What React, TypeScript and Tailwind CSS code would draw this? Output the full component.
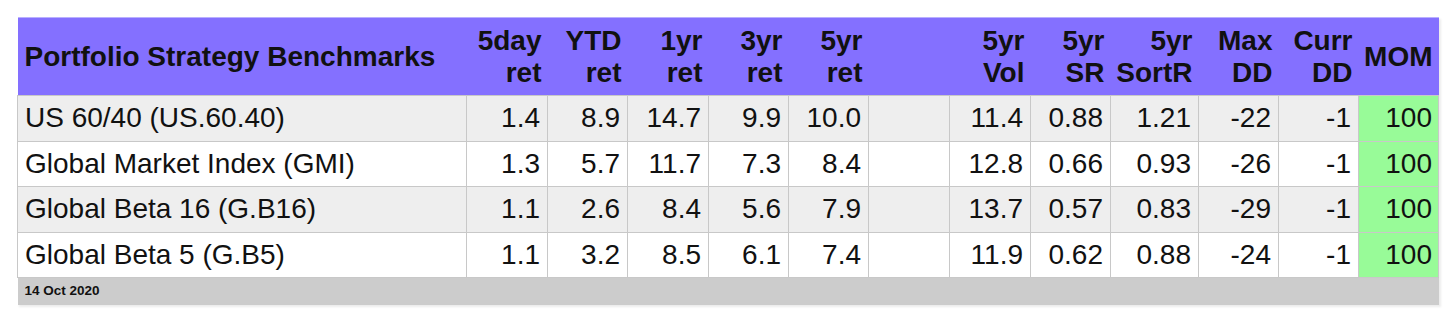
const rows = [
  { name: 'US 60/40 (US.60.40)', vals: ['1.4', '8.9', '14.7', '9.9', '10.0', '', '11.4', '0.88', '1.21', '-22', '-1'], mom: '100' },
  { name: 'Global Market Index (GMI)', vals: ['1.3', '5.7', '11.7', '7.3', '8.4', '', '12.8', '0.66', '0.93', '-26', '-1'], mom: '100' },
  { name: 'Global Beta 16 (G.B16)', vals: ['1.1', '2.6', '8.4', '5.6', '7.9', '', '13.7', '0.57', '0.83', '-29', '-1'], mom: '100' },
  { name: 'Global Beta 5 (G.B5)', vals: ['1.1', '3.2', '8.5', '6.1', '7.4', '', '11.9', '0.62', '0.88', '-24', '-1'], mom: '100' },
];

const headers: [string, string][] = [
  ['5day', 'ret'],
  ['YTD', 'ret'],
  ['1yr', 'ret'],
  ['3yr', 'ret'],
  ['5yr', 'ret'],
  ['', ''],
  ['5yr', 'Vol'],
  ['5yr', 'SR'],
  ['5yr', 'SortR'],
  ['Max', 'DD'],
  ['Curr', 'DD'],
];

const widths = [449, 81, 80, 81, 80, 80, 81, 81, 80, 88, 80, 80, 80];

export default function App() {
  return (
    <div className="min-h-[323px] bg-white pl-[17px] pt-[17px] font-['Liberation_Sans',Arial,sans-serif] text-[#111]">
      <table className="table-fixed border-collapse w-[1421px] shadow-[2px_2px_2px_rgba(0,0,0,0.08)]">
        <colgroup>
          {widths.map((w, i) => (
            <col key={i} style={{ width: w }} />
          ))}
        </colgroup>
        <thead>
          <tr className="h-[78px] bg-[#8470ff] border-t border-[#b9b0ff]">
            <th className="px-[7px] text-left align-middle text-[28px] leading-[32px] font-bold">
              Portfolio Strategy Benchmarks
            </th>
            {headers.map(([a, b], i) => (
              <th key={i} className="pr-[6px] text-right align-middle text-[28px] leading-[32px] font-bold whitespace-nowrap">
                {a}
                <br />
                {b}
              </th>
            ))}
            <th className="pr-[6px] text-right align-middle text-[28px] leading-[32px] font-bold">MOM</th>
          </tr>
        </thead>
        <tbody>
          {rows.map((r, i) => (
            <tr key={i} className={`h-[45.5px] ${i % 2 === 0 ? 'bg-[#eeeeee]' : 'bg-white'}`}>
              <td className="border border-[#c8c8c8] px-[7px] text-left text-[28px] leading-[32px] whitespace-nowrap">{r.name}</td>
              {r.vals.map((v, j) => (
                <td key={j} className="border border-[#c8c8c8] pr-[7px] text-right text-[28px] leading-[32px]">
                  {v}
                </td>
              ))}
              <td className="border border-[#c8c8c8] bg-[#98fb98] pr-[6px] text-right text-[28px] leading-[32px]">{r.mom}</td>
            </tr>
          ))}
          <tr className="h-[27px] bg-[#cccccc]">
            <td colSpan={13} className="px-[7px] text-left text-[13.5px] font-bold">
              14 Oct 2020
            </td>
          </tr>
        </tbody>
      </table>
    </div>
  );
}
